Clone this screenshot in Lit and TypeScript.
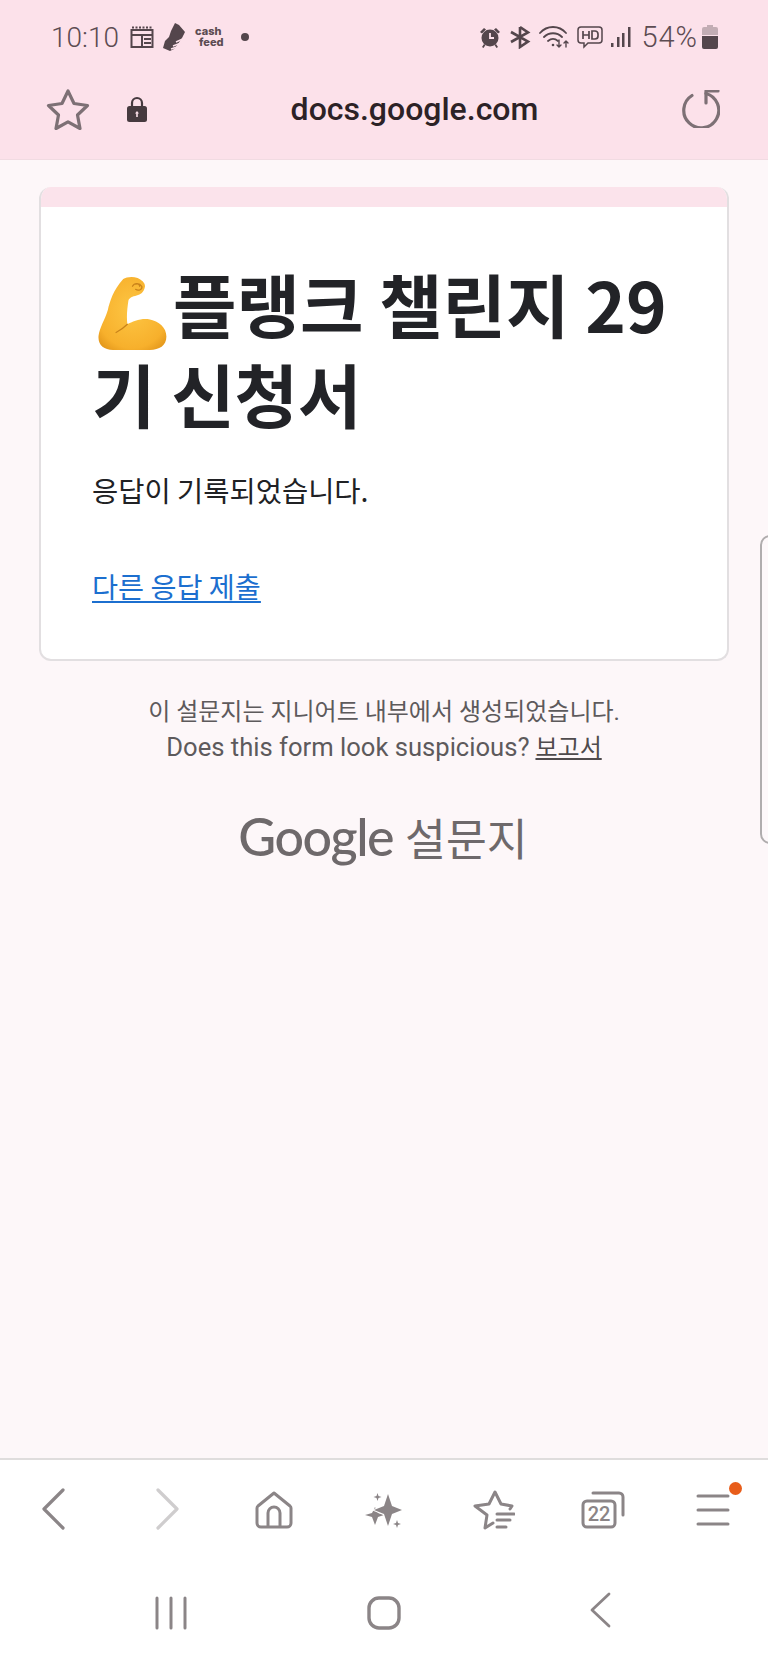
import { LitElement, html, css, svg } from "lit";
import { customElement } from "lit/decorators.js";

const arrow = (d: string, color = "#8b8587", w = 3.2) => html`
  <svg width="40" height="48" viewBox="0 0 40 48" fill="none" stroke=${color} stroke-width=${w} stroke-linecap="round" stroke-linejoin="round">
    ${svg`<path d=${d} />`}
  </svg>`;

@customElement("app-root")
export class AppRoot extends LitElement {
  static styles = css`
    :host {
      display: block;
      font-family: Roboto, "Noto Sans CJK KR", sans-serif;
    }
    .page {
      position: relative;
      width: 768px;
      height: 1664px;
      display: flex;
      flex-direction: column;
      background: #fdf7f9;
      overflow: hidden;
    }
    .top {
      background: #fce1ea;
      border-bottom: 1px solid #f1dbe2;
      height: 159px;
      flex: none;
    }
    .status {
      height: 74px;
      display: flex;
      align-items: center;
      padding: 0 50px 0 51px;
      color: #5c4c52;
    }
    .time {
      font-size: 28px;
      width: 79px;
      font-weight: 300;
    }
    .status-left {
      display: flex;
      align-items: center;
    }
    .cash {
      font: 800 11px/11px Inter, sans-serif;
      width: 30px;
      margin-left: 8px;
      color: #5c4c52;
    }
    .cash span {
      display: block;
    }
    .cash .feed {
      padding-left: 4px;
    }
    .dot {
      width: 8px;
      height: 8px;
      border-radius: 50%;
      background: #54464c;
      margin-left: 16px;
    }
    .status-right {
      margin-left: auto;
      display: flex;
      align-items: center;
      gap: 8px;
    }
    .pct {
      font-size: 29px;
      font-weight: 300;
      letter-spacing: 1px;
      margin: 0 -4px 0 2px;
    }
    .url {
      display: flex;
      align-items: center;
      height: 70px;
      padding: 0 48px 0 46px;
    }
    .host {
      flex: 1;
      text-align: center;
      font-size: 32px;
      font-weight: 500;
      color: #2c2226;
    }
    .lock {
      margin-left: 37px;
    }
    .content {
      flex: 1;
      padding: 27px 39px 0 39px;
    }
    .card {
      background: #fff;
      border: 2px solid #e2dfe1;
      border-top: none;
      border-radius: 12px;
      overflow: hidden;
      height: 474px;
      box-sizing: border-box;
    }
    .band {
      height: 20px;
      background: #fbe3eb;
    }
    .card-body {
      padding: 54px 40px 0 51px;
    }
    h1 {
      margin: 0;
      font: 700 69px/84px "Noto Sans CJK KR", sans-serif;
      color: #222327;
    }
    h1 .arm {
      display: inline-block;
      width: 70px;
      height: 75px;
      vertical-align: -18px;
      margin: -20px 5px 0 6px;
    }
    .msg {
      margin: 35px 0 0;
      font: 400 28.5px/40px "Noto Sans CJK KR", sans-serif;
      color: #202124;
    }
    .again {
      display: inline-block;
      margin-top: 56px;
      font: 400 28.3px/40px "Noto Sans CJK KR", sans-serif;
      color: #1c6fcf;
      text-decoration: underline;
      text-underline-offset: 3px;
    }
    .note {
      margin-top: 34px;
      text-align: center;
      font-size: 24px;
      line-height: 35px;
      color: #5d5a5c;
    }
    .note .en {
      font-size: 25.6px;
    }
    .note a {
      color: #4f4b4d;
      text-decoration: underline;
    }
    .brand {
      margin-top: 37px;
      display: flex;
      justify-content: center;
      align-items: baseline;
      gap: 12px;
      color: #6e696b;
      padding-right: 2px;
    }
    .brand .g {
      font: 500 52px/66px Lato, sans-serif;
      letter-spacing: -1.5px;
    }
    .brand .k {
      font: 400 44.4px/66px "Noto Sans CJK KR", sans-serif;
    }
    .handle {
      position: absolute;
      left: 760px;
      top: 535px;
      width: 10px;
      height: 305px;
      border: 2px solid #b0adae;
      border-radius: 10px 0 0 10px;
      background: #fdf8fa;
    }
    .bottom {
      flex: none;
      background: #fff;
      border-top: 2px solid #dfdddd;
      height: 204px;
    }
    .nav {
      display: grid;
      grid-template-columns: repeat(7, 1fr);
      height: 99px;
      align-items: center;
      justify-items: center;
    }
    .nav .back {
      margin-right: 4px;
    }
    .nav .fwd {
      margin-left: 6px;
    }
    .menu {
      position: relative;
      display: flex;
    }
    .badge {
      position: absolute;
      right: -12px;
      top: -12px;
      width: 13px;
      height: 13px;
      border-radius: 50%;
      background: #e85d1a;
    }
    .sys {
      display: grid;
      grid-template-columns: repeat(3, 1fr);
      padding: 4px 62px 0;
      height: 103px;
      box-sizing: border-box;
      align-items: center;
      justify-items: center;
    }
    .sys .s1 {
      margin-left: 4px;
    }
    .sys .s3 {
      margin-left: 4px;
    }
    .tabs-num {
      font: 500 20px Roboto, sans-serif;
      fill: #8b8587;
    }
  `;

  render() {
    const emoji = svg`
      <defs>
        <radialGradient id="arm" cx="0.5" cy="0.45" r="0.75">
          <stop offset="0" stop-color="#fdc644" />
          <stop offset="0.7" stop-color="#f7b02c" />
          <stop offset="1" stop-color="#d98a12" />
        </radialGradient>
      </defs>
      <path fill="url(#arm)" d="M24 2C27 0 33 -1 38 1C42 3 46 6 45 10C44 15 41 17 37 18C33 19 30 20 29 23C28 30 27 38 28 46C33 43 41 40 49 41C59 43 66 49 66 58C66 67 59 71 50 71L14 71C5 71 -1 66 0 57C1 49 6 42 9 32C11 24 14 13 24 2Z" />
      <path fill="none" stroke="#c9831a" stroke-width="1.200" stroke-linecap="round" d="M33 9c2-4 7-3 9 0c1 3-3 5-6 3M36 7c2-1 4 0 4 2M28 46c-3 3-7 6-11 8" />`;

    return html`
      <div class="page">
        <div class="top">
          <div class="status">
            <span class="time">10:10</span>
            <div class="status-left">
              <svg width="24" height="22" viewBox="0 0 24 22" fill="none" stroke="#54464c" stroke-width="2">
                <path d="M1.500 4h21v17h-21zM1.500 9h21M12 9v12M14 13h7M14 17h7" />
                <path d="M2 1.500h20" stroke-dasharray="2 1.500" />
              </svg>
              <svg style="margin-left:9px" width="24" height="28" viewBox="0 0 24 28" fill="#54464c">
                <path d="M12 0l4 2 6 7-3 6-4 6-4 5-4 2-7-3 2-7 4-4 2-6z" />
                <path d="M13 19l9-4M10 23l8-3M8 26l6-2" stroke="#fce1ea" stroke-width="1.500" />
              </svg>
              <div class="cash"><span>cash</span><span class="feed">feed</span></div>
              <span class="dot"></span>
            </div>
            <div class="status-right">
              <svg width="22" height="22" viewBox="0 0 22 22" fill="#54464c">
                <circle cx="11" cy="12" r="8.500" />
                <path d="M1 6l4-4 2 1.500-4 4zM21 6l-4-4-2 1.500 4 4zM3 21l2-3 1.500 1-2 3zM19 21l-2-3-1.500 1 2 3z" />
                <path d="M11 7v5h4" fill="none" stroke="#fce1ea" stroke-width="1.800" />
              </svg>
              <svg width="22" height="24" viewBox="0 0 22 24" fill="none" stroke="#54464c" stroke-width="2.600">
                <path d="M11 2v20l8-5.500L2 7M11 2l8 5.500L2 17" />
              </svg>
              <svg width="30" height="24" viewBox="0 0 30 24" fill="none" stroke="#54464c" stroke-width="1.800" stroke-linecap="round">
                <path d="M1 8c7-8 19-8 26 0M5 12c5-5 13-5 18 0M9 16c3-2.500 7-2.500 10 0" />
                <circle cx="14" cy="20" r="1.300" fill="#54464c" stroke="none" />
                <path d="M20 15v7M18 20l2 2 2-2M27 22v-6M25 18l2-2 2 2" stroke-width="1.400" />
              </svg>
              <svg width="26" height="24" viewBox="0 0 26 24" fill="none" stroke="#54464c" stroke-width="1.500">
                <path d="M4 2h18a3 3 0 0 1 3 3v10a3 3 0 0 1-3 3H11l-4 4v-4H4a3 3 0 0 1-3-3V5a3 3 0 0 1 3-3z" />
                <path d="M6 6v8M12 6v8M6 10h6M15 6v8h3a3 3 0 0 0 3-3V9a3 3 0 0 0-3-3z" stroke-width="1.700" />
              </svg>
              <svg width="20" height="22" viewBox="0 0 20 22" fill="#54464c">
                <rect x="0" y="17" width="2.500" height="4" />
                <rect x="6" y="11" width="2.500" height="10" />
                <rect x="11" y="7" width="2.500" height="14" />
                <rect x="17" y="1" width="2.500" height="20" />
              </svg>
              <span class="pct">54%</span>
              <svg width="16" height="24" viewBox="0 0 16 24">
                <path d="M5 0h6v2h3a2 2 0 0 1 2 2v6H0V4a2 2 0 0 1 2-2h3z" fill="#c2adb4" />
                <path d="M0 11h16v11a2 2 0 0 1-2 2H2a2 2 0 0 1-2-2z" fill="#54464c" />
              </svg>
            </div>
          </div>
          <div class="url">
            <svg width="44" height="42" viewBox="0 0 44 42" fill="none" stroke="#7d7075" stroke-width="3.200" stroke-linejoin="round">
              <path d="M22 3l6 12.500 13.500 2-10 9.500 2.500 13.500L22 33.800 10 40.500 12.500 27l-10-9.500 13.500-2z" />
            </svg>
            <svg class="lock" width="20" height="26" viewBox="0 0 20 26">
              <path d="M5 11V7a5 5 0 0 1 10 0v4" fill="none" stroke="#463a3f" stroke-width="2.200" />
              <rect y="10" width="20" height="16" rx="2.500" fill="#463a3f" />
              <path d="M10 15l2 2.500h-1.200V21H9.200v-3.500H8z" fill="#fce1ea" />
            </svg>
            <span class="host">docs.google.com</span>
            <svg width="38" height="38" viewBox="0 0 38 38" fill="none" stroke="#7d7075" stroke-width="3.200" stroke-linecap="round" stroke-linejoin="round">
              <path d="M10 5.500A17.500 17.500 0 1 0 24 3.500" />
              <path d="M36 1H24v12" />
            </svg>
          </div>
        </div>

        <div class="content">
          <div class="card">
            <div class="band"></div>
            <div class="card-body">
              <h1><svg class="arm" viewBox="0 -1 67 73">${emoji}</svg>플랭크 챌린지 29 기 신청서</h1>
              <p class="msg">응답이 기록되었습니다.</p>
              <a class="again">다른 응답 제출</a>
            </div>
          </div>
          <div class="note">
            이 설문지는 지니어트 내부에서 생성되었습니다.<br />
            <span class="en">Does this form look suspicious?</span> <a>보고서</a>
          </div>
          <div class="brand"><span class="g">Google</span><span class="k">설문지</span></div>
        </div>

        <div class="handle"></div>

        <div class="bottom">
          <div class="nav">
            <span class="back">${arrow("M30 6L11 25l19 19")}</span>
            <span class="fwd">${arrow("M10 6l19 19-19 19", "#cfcdce")}</span>
            <svg width="38" height="38" viewBox="0 0 38 38" fill="none" stroke="#8b8587" stroke-width="3" stroke-linejoin="round">
              <path d="M19 2L3 15a3 3 0 0 0-1 2v15a4 4 0 0 0 4 4h26a4 4 0 0 0 4-4V17a3 3 0 0 0-1-2z" />
              <path d="M13 36V22a6 6 0 0 1 12 0v14" />
            </svg>
            <svg width="42" height="40" viewBox="0 0 42 40" fill="#8b8587">
              <path d="M12 17l3 6 6 2-6 2-3 8-3-8-7-2 7-2z" />
              <path d="M25 4l4 12 10 4-10 4-4 12-4-12-10-4 10-4z" stroke="#fff" stroke-width="2" paint-order="stroke" />
              <path d="M14.500 3l1 3 3 1-3 1-1 3-1-3-3-1 3-1zM34 30l1 3 3 1-3 1-1 3-1-3-3-1 3-1z" />
            </svg>
            <svg width="42" height="40" viewBox="0 0 42 40" fill="none" stroke="#8b8587" stroke-width="3" stroke-linecap="round" stroke-linejoin="round">
              <path d="M20 33l-8 5 2-13L2 16l14-2 6-12 6 12 11 2-2 3" />
              <path d="M24 24h17M24 30h13M24 37h9" />
            </svg>
            <svg width="44" height="38" viewBox="0 0 44 38" fill="none" stroke="#8b8587" stroke-width="3" stroke-linecap="round">
              <rect x="2" y="10" width="32" height="26" rx="4" />
              <path d="M12 2h26a4 4 0 0 1 4 4v18" />
              <text class="tabs-num" x="18" y="30" text-anchor="middle" stroke="none">22</text>
            </svg>
            <div class="menu">
              <svg width="34" height="32" viewBox="0 0 34 32" stroke="#8b8587" stroke-width="3" stroke-linecap="round">
                <path d="M2 2h30M2 16h30M2 30h30" />
              </svg>
              <span class="badge"></span>
            </div>
          </div>
          <div class="sys">
            <svg class="s1" width="34" height="34" viewBox="0 0 34 34" stroke="#8b8587" stroke-width="3" stroke-linecap="round">
              <path d="M3 2v30M17 2v30M31 2v30" />
            </svg>
            <svg width="34" height="34" viewBox="0 0 34 34" fill="none" stroke="#8b8587" stroke-width="3.400">
              <rect x="2" y="2" width="30" height="30" rx="10" />
            </svg>
            <span class="s3">${arrow("M28 7L11 23l17 16", "#8b8587", 2.8)}</span>
          </div>
        </div>
      </div>
    `;
  }
}
